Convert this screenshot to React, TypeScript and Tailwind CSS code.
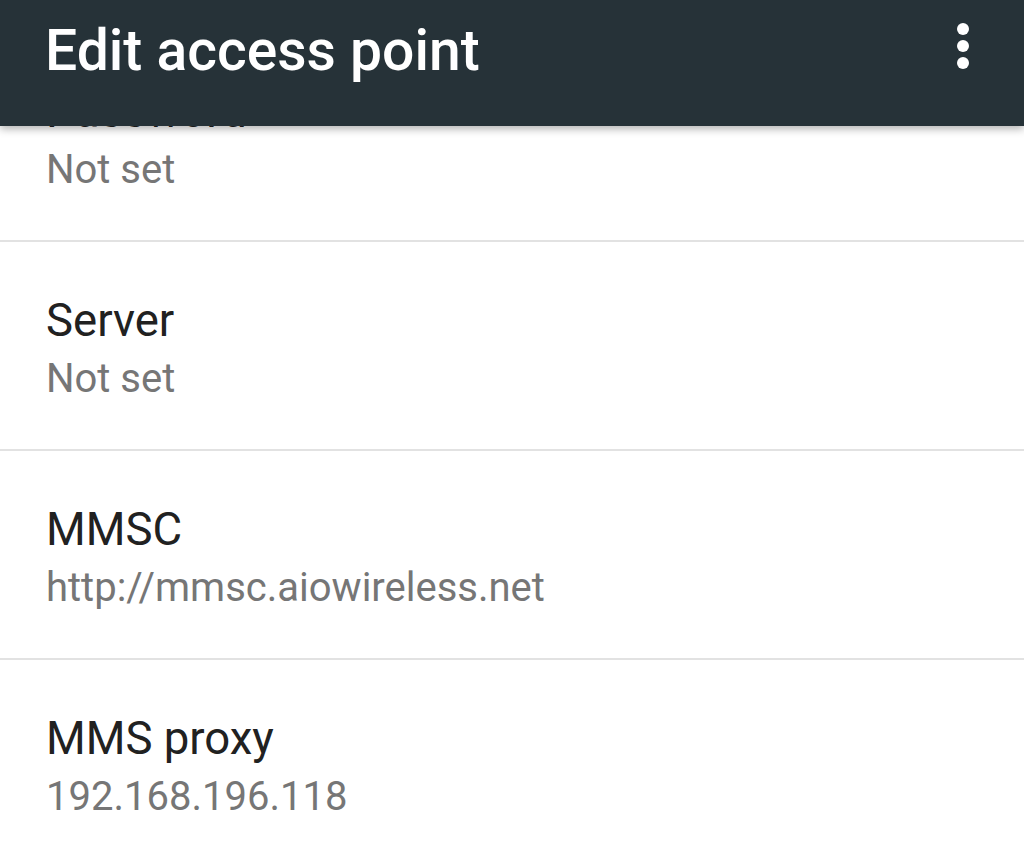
import React from "react";

type Pref = { title: string; summary: string };

const prefs: Pref[] = [
  { title: "Password", summary: "Not set" },
  { title: "Server", summary: "Not set" },
  { title: "MMSC", summary: "http://mmsc.aiowireless.net" },
  { title: "MMS proxy", summary: "192.168.196.118" },
];

const PrefRow: React.FC<Pref> = ({ title, summary }) => (
  <div className="pl-[46px] pt-[51px] pb-[40px] border-b-2 border-[#e2e2e2]">
    <div className="text-[45.5px] leading-[56px] text-[#212121]">{title}</div>
    <div className="text-[40px] leading-[60px] text-[#767676]">{summary}</div>
  </div>
);

const App: React.FC = () => {
  return (
    <div
      className="w-[1024px] h-[860px] overflow-hidden bg-white"
      style={{ fontFamily: "Roboto, 'Noto Sans', sans-serif" }}
    >
      <header className="relative z-10 h-[126px] bg-[#263238] flex items-start justify-between pl-[45px] pr-[55px] shadow-[0_3px_8px_rgba(0,0,0,0.3)]">
        <h1 className="pt-[17px] text-[57px] leading-[68px] font-medium text-white">
          Edit access point
        </h1>
        <button className="mt-[23px] flex flex-col items-center gap-[5px]">
          <span className="block w-[12px] h-[12px] rounded-full bg-white" />
          <span className="block w-[12px] h-[12px] rounded-full bg-white" />
          <span className="block w-[12px] h-[12px] rounded-full bg-white" />
        </button>
      </header>
      <div className="-mt-[93px]">
        {prefs.map((p) => (
          <PrefRow key={p.title} {...p} />
        ))}
      </div>
    </div>
  );
};

export default App;
